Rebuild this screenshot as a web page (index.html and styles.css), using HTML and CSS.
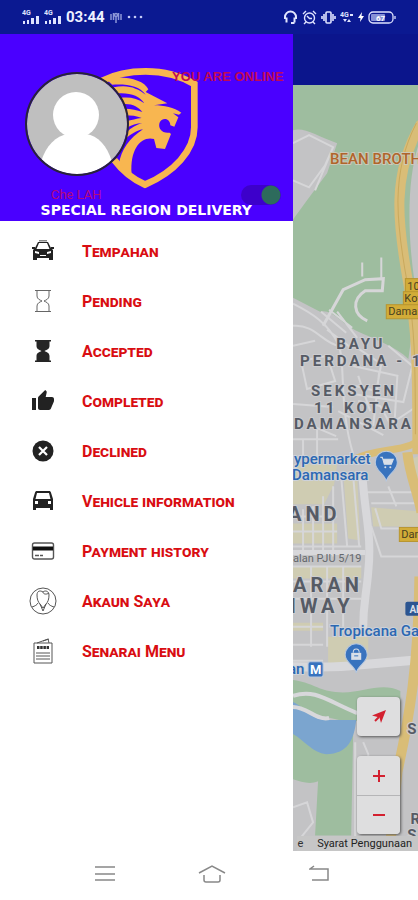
FILE: index.html
```
<!DOCTYPE html>
<html lang="ms">
<head>
  <meta charset="UTF-8">
  <meta name="viewport" content="width=device-width, initial-scale=1.0">
  <title>Special Region Delivery</title>
  <link rel="stylesheet" href="styles.css">
</head>
<body>
  <div class="statusbar">
    <div class="status-group">
      <svg width="18" height="16" viewBox="0 0 18 16" fill="#dfe3ff"><text class="tiny" x="0" y="6">4G</text><path d="M1 12h2v3H1zM5 11h2v4H5zM9 9h3v6H9zM14 7h3v8h-3z"/></svg>
      <svg width="18" height="16" viewBox="0 0 18 16" fill="#dfe3ff"><text class="tiny" x="0" y="6">4G</text><path d="M1 12h2v3H1zM5 11h2v4H5zM9 9h3v6H9zM14 7h3v8h-3z"/></svg>
      <span class="clock">03:44</span>
      <svg width="14" height="14" viewBox="0 0 14 14" fill="none" stroke="#8d96d8" stroke-width="1.5"><path d="M2 4v6M4.500 3v7M9.500 3v7M12 4v6M7 6v7"/><circle cx="7" cy="5" r="1.500"/></svg>
      <svg width="16" height="4" viewBox="0 0 16 4" fill="#c5cbf7"><circle cx="2" cy="2" r="1.300"/><circle cx="8" cy="2" r="1.300"/><circle cx="14" cy="2" r="1.300"/></svg>
    </div>
    <div class="status-group">
      <svg width="15" height="15" viewBox="0 0 15 15" fill="none" stroke="#e4e7ff" stroke-width="2"><path d="M2 9V7a5.500 5.500 0 0 1 11 0v2M3.500 7.500v5M11.500 7.500v5M11.500 13H8"/></svg>
      <svg width="15" height="15" viewBox="0 0 15 15" fill="none" stroke="#dfe3ff" stroke-width="1.400"><circle cx="7.500" cy="8" r="5"/><path d="M5 6l2.500 2.500H10M1 4l3-3M14 4l-3-3M4 12l-2 2M11 12l2 2"/></svg>
      <svg width="15" height="15" viewBox="0 0 15 15" fill="none" stroke="#dfe3ff" stroke-width="1.600"><rect x="5" y="2" width="5" height="11" rx="1"/><path d="M3 4v7M12 4v7M1 6v3M14 6v3"/></svg>
      <svg width="14" height="15" viewBox="0 0 14 15" fill="#dfe3ff"><text class="tiny" x="0" y="7">4G</text><path d="M10 4h3v2h-3zM3 9l2 3 2-3zM7 12l2-3 2 3z"/></svg>
      <svg width="6" height="12" viewBox="0 0 6 12" fill="#fff"><path d="M4 1L0 7h2.500L2 11l4-6H3.500z"/></svg>
      <svg width="28" height="13" viewBox="0 0 28 13" fill="none" stroke="#dfe3ff" stroke-width="1.300"><rect x="1" y="1" width="24" height="11" rx="4"/><path d="M27 5v3"/><rect x="3" y="3" width="14" height="7" rx="1" fill="#8791d6" stroke="none"/><text class="battery" x="8" y="10">67</text></svg>
    </div>
  </div>

  <main class="screen">
    <aside class="drawer">
      <header class="profile">
        <svg class="shield" viewBox="0 0 312 384">
          <path fill="none" stroke="#f8b650" stroke-width="20" d="M10 50C55 27 100 22 140 22c52 0 105 14 146 38v130c0 70-61 135-148 172-38-17-68-42-92-74"/>
          <path fill="#f8b650" d="M20 44C80 34 135 48 148 76L140 84 205 118 165 124C195 124 225 130 247 146L240 152 222 148 238 160 226 188 214 184C214 168 200 160 188 168 178 175 178 192 188 200 194 206 204 206 212 206L216 210 198 255 172 252 165 225C130 215 92 250 98 330L60 300C66 258 92 222 132 196 110 200 95 212 80 224L82 206C98 190 112 182 130 178 112 178 98 184 82 192L82 172C98 168 112 164 128 162 112 156 98 154 78 154L76 134C98 134 114 138 130 144 118 128 100 118 72 120L64 102C92 98 116 104 136 118 122 96 96 86 58 88L44 70C85 60 115 72 140 92 120 66 90 60 40 62z"/>
        </svg>
        <p class="brand">SPECIAL REGION DELIVERY</p>
        <svg class="avatar" viewBox="0 0 104 104">
          <defs><clipPath id="face"><circle cx="52" cy="52" r="50"/></clipPath></defs>
          <circle cx="52" cy="52" r="50" fill="#bfbfbf"/>
          <g clip-path="url(#face)" fill="#fff"><circle cx="51" cy="43" r="23"/><path d="M16 90c5-17 15-26 27-28h18c12 2 21 11 26 28v14H16z"/><path d="M40 58h22v10H40z"/></g>
          <circle cx="52" cy="52" r="51" fill="none" stroke="#29233a" stroke-width="2"/>
        </svg>
        <p class="user-name">Che LAH</p>
        <label class="online-label" for="online">YOU ARE ONLINE</label>
        <input class="switch" type="checkbox" id="online" checked>
      </header>

      <nav class="menu">
        <a href="#tempahan">
          <svg width="24" height="24" viewBox="0 0 24 24" fill="#222"><path d="M8 1h8v1.500H8z" fill="#888"/><path fill-rule="evenodd" d="M7 3h10l3 6 2 2v10h-4v-2H6v2H2V11l2-2zM8 4L5.500 10h13L16 4zM4 12v2l4 1v-2zM20 12l-4 1v2l4-1zM9 16v1h6v-1z"/><path d="M1 8h3v2H1zM20 8h3v2h-3z"/></svg>
          Tempahan
        </a>
        <a href="#pending">
          <svg width="24" height="24" viewBox="0 0 24 24" fill="none" stroke="#666" stroke-width="1"><path d="M4 1.500h16M4 22.500h16M6 2v5c0 3 3 4 5 5-2 1-5 2-5 5v5M18 2v5c0 3-3 4-5 5 2 1 5 2 5 5v5"/></svg>
          Pending
        </a>
        <a href="#accepted">
          <svg width="24" height="24" viewBox="0 0 24 24" fill="#252525"><path d="M4 1h16v1.500h-1.500V7c0 3-3 4-5 5 2 1 5 2 5 5v4.500H20V23H4v-1.500h1.500V17c0-3 3-4 5-5-2-1-5-2-5-5V2.500H4z"/></svg>
          Accepted
        </a>
        <a href="#completed">
          <svg width="24" height="24" viewBox="0 0 24 24" fill="#222"><path d="M1 9h4v12H1zM23 10c0-1.100-.9-2-2-2h-6.300l1-4.600c.1-.7-.1-1.200-.4-1.500L14.200 1 7.600 7.600C7.200 8 7 8.500 7 9v10c0 1.100.9 2 2 2h9c.8 0 1.500-.5 1.800-1.200l3-7.100c.1-.2.2-.5.2-.7z"/></svg>
          Completed
        </a>
        <a href="#declined">
          <svg width="24" height="24" viewBox="0 0 24 24"><circle cx="12" cy="12" r="10.500" fill="#222"/><path d="M8 8l8 8M16 8l-8 8" stroke="#fff" stroke-width="2.200"/></svg>
          Declined
        </a>
        <a href="#vehicle">
          <svg width="24" height="24" viewBox="0 0 24 24" fill="#222"><path fill-rule="evenodd" d="M6 2h12c1 0 1.500.5 1.800 1L22 10v11h-3v-2H5v2H2V10l2.200-7C4.500 2.500 5 2 6 2zM6 4l-1.500 6h15L18 4zM4 12v3h3v-3zM17 12v3h3v-3z"/></svg>
          Vehicle information
        </a>
        <a href="#payment">
          <svg width="24" height="24" viewBox="0 0 24 24" fill="none" stroke="#555" stroke-width="1.400"><rect x="1.500" y="4" width="21" height="16" rx="2"/><path d="M2 9.500h20" stroke="#111" stroke-width="4"/><path d="M4 16.500h4M9 16.500h3"/></svg>
          Payment history
        </a>
        <a href="#akaun">
          <svg width="28" height="28" viewBox="0 0 28 28" fill="none" stroke="#555" stroke-width="1"><circle cx="14" cy="14" r="13"/><path d="M8 8c0-4 3-5 6-3 2-2 6-1 6 3 0 4-1 7-3 9l-3 4-3-4c-2-2-3-5-3-9zM14 5c0 2 3 3 6 1M9 16c-1 2-3 3-6 4M19 16c1 2 3 3 6 4M11 17l3 7 3-7"/></svg>
          Akaun Saya
        </a>
        <a href="#senarai">
          <svg width="28" height="28" viewBox="0 0 28 28" fill="none" stroke="#555" stroke-width="1"><path d="M5 6h18v20H5zM8 6l11-4 1 4M14 4l6-2M7 16h14M7 19h14M7 22h14"/><path d="M8 10.500h12" stroke="#333" stroke-width="3" stroke-dasharray="2.500 .7"/></svg>
          Senarai Menu
        </a>
      </nav>
    </aside>

    <section class="map-pane">
      <div class="appbar"></div>
      <div class="map">
        <svg class="map-canvas" viewBox="0 0 125 766" preserveAspectRatio="xMinYMin slice">
          <rect width="600" height="766" fill="#c3c3c5"/>
          <!-- parks and water -->
          <g fill="#9ebd9f">
            <path d="M0 0h125v200l-10 73c-12-12-35-20-52-28-16-8-24-22-36-19L0 212z"/>
            <path d="M0 593c20 3 25 10 42 12 26 3 44-11 65-1v30H50L0 622z"/>
            <path d="M0 645h60l-2 103H22l3-54c-9 4-17 0-25-2z"/>
          </g>
          <path fill="#c3c3c5" d="M0 45c12-3 24 6 44 13L34 88 14 115 0 134zM125 60c-10 30-12 80-4 135h4z"/>
          <path fill="#7ba5cf" d="M0 615c14 7 19 18 34 18h29c-2 19-8 34-30 34-13-1-21-13-33-20z"/>
          <!-- built up blocks -->
          <g fill="#cfccb2">
            <path d="M0 378h44l-3 20-10 20H0zM78 421l47 4v15H80zM50 385l14 4 3 65-12-2zM35 550h40v28H35zM0 437h44v20H0zM0 480h68v12H0zM0 536h30v8H0zM125 370l-12 5 12 25z"/>
          </g>
          <!-- small streets -->
          <g fill="none" stroke="#d6d6d8" stroke-width="2">
            <path d="M0 58l16-8 24 12-8 18-16 22L0 95M40 62L22 105M69 191v-14M88 194v-22M0 218c20 10 35 20 45 40 8 18 0 60 15 110M28 226l25 21M36 224l23 18M34 244l24 18M44 226l20 26M0 240c22-2 30 18 46 20M58 258l30 20-5 27-25-6M60 280l45 10M95 260l24 20-9 36-50-8M65 315l22 5 10 18 27-18M45 325l45 24M0 260l22-5M8 275l26-5 8 25-28 8zM0 318l40 3M15 338l28 12M65 290l12 35M86 285l-6 55M104 290l-3 50"/>
            <path stroke-width="3" d="M30 240l20-36 22-10 18-1-1 12H72c-14 9-12 24 2 30"/>
            <path d="M0 430h44M0 445h44M0 460h68M0 480h68M0 495h68M0 512h68M0 540h30M0 558h30M0 574h30M10 423v44M20 420v48M30 410v60M40 400v70M18 480v80M34 480v80M50 480v60M48 390l6 70M60 390l6 70M74 406h45M78 417h47M82 422l6 20h37M78 440l10 30h37M95 400l8 20M0 353h45M10 353v20M24 343v30M0 720l14-5 6 20-12 15M62 655v100M70 655l5 12v30"/>
          </g>
          <g fill="none" stroke="#d8d8db">
            <path stroke-width="8" d="M69 385c2 42 10 62 6 100-2 26-6 34-5 65"/>
            <path stroke-width="5" d="M0 466h72"/>
            <path stroke-width="9" d="M0 580c35 0 45 1 65-2l60-5"/>
            <path stroke-width="4" d="M0 609c22-8 36 6 64 17M0 620c14 0 24 14 36 11"/>
          </g>
          <!-- highways -->
          <g fill="none" stroke="#d9bd77" stroke-width="10">
            <path d="M128 38c-30 50-24 100-13 160 8 45 9 70 9 170"/>
            <path d="M125 355c-20 12-38 6-64 18" stroke-width="7"/>
            <path d="M114 366c2 22 10 38 14 60M126 490c-1 90-10 140-22 195l-8 81"/>
          </g>
          <path fill="none" stroke="#c9a95d" d="M123 38c-26 50-20 100-9 160 7 45 8 70 8 150"/>

          <g class="road-tag">
            <rect x="112" y="193" width="30" height="14"/><rect x="110" y="206" width="40" height="14"/><rect x="93" y="219" width="60" height="14"/>
            <rect x="106" y="441" width="60" height="14"/>
          </g>
          <g class="road-name"><text x="114" y="204">10</text><text x="111" y="216">Kota</text><text x="95" y="229">Damansara</text><text x="108" y="452">Damansara</text></g>
          <rect x="112" y="515" width="40" height="14" rx="2" fill="#2c5591"/>
          <text class="route" x="116" y="526">AH2</text>

          <text class="place-orange" x="37" y="79">BEAN BROTHERS</text>
          <g class="area">
            <text x="43" y="263">BAYU</text><text x="7" y="280">PERDANA - 1</text>
            <text x="18" y="310">SEKSYEN</text><text x="21" y="327">11 KOTA</text><text x="1" y="343">DAMANSARA</text>
          </g>
          <g class="area area-large"><text x="-5" y="435">AND</text><text x="0" y="505">ARAN</text><text x="-3" y="526">IWAY</text></g>
          <text class="street" x="0" y="475">alan PJU 5/19</text>
          <g class="poi">
            <text x="1" y="378">ypermarket</text><text x="-1" y="394">Damansara</text><text x="37" y="549">Tropicana Gardens</text><text x="-5" y="587">an</text>
          </g>
          <g class="area"><text x="114" y="647">S</text><text x="117" y="737">R</text><text x="114" y="753">S</text></g>

          <g fill="#3873be" stroke="#b8c8de" stroke-width="1">
            <path d="M93 395c-2-8-11-10-11-19a11 11 0 0 1 22 0c0 9-9 11-11 19zM63 586c-2-8-11-10-11-18a11 11 0 0 1 22 0c0 8-9 10-11 18z"/>
            <rect x="15" y="575" width="15" height="15" rx="2"/>
          </g>
          <path d="M87 371h2l2 7h7l2-5H90" fill="#d8dfe8" stroke="#d8dfe8"/><circle cx="92" cy="381" r="1" fill="#d8dfe8"/><circle cx="97" cy="381" r="1" fill="#d8dfe8"/>
          <path d="M58 566h10v7H58z" fill="#d8dfe8"/><path d="M60 566c0-5 6-5 6 0" fill="none" stroke="#d8dfe8"/><path d="M61 569h4" stroke="#3873be"/>
          <text class="metro" x="17" y="587">M</text>
        </svg>

        <div class="controls">
          <button class="control locate" aria-label="My location">
            <svg width="16" height="16" viewBox="0 0 16 16" fill="#d3202f"><path d="M15 1L10 14 8.500 8.500 1 6.500z"/><path d="M8 8l-4 4" stroke="#d3202f" stroke-width="2"/></svg>
          </button>
          <div class="zoom">
            <button class="control" aria-label="Zoom in"><svg width="14" height="14" viewBox="0 0 14 14" stroke="#d3202f" stroke-width="2"><path d="M7 1v12M1 7h12"/></svg></button>
            <button class="control" aria-label="Zoom out"><svg width="14" height="14" viewBox="0 0 14 14" stroke="#d3202f" stroke-width="2"><path d="M1 7h12"/></svg></button>
          </div>
        </div>
        <div class="terms"><span>e</span><a href="#terms">Syarat Penggunaan</a></div>
      </div>
    </section>
  </main>

  <div class="navbar">
    <button aria-label="Recent apps"><svg width="20" height="18" viewBox="0 0 20 18" fill="none" stroke="#888" stroke-width="1.500"><path d="M0 2h20M0 9h20M0 15h20"/></svg></button>
    <button aria-label="Home"><svg width="28" height="20" viewBox="0 0 28 20" fill="none" stroke="#888" stroke-width="1.500"><path d="M1 9l13-7 13 7M6 11v5c0 1 1 2 2 2h12c1 0 2-1 2-2v-5"/></svg></button>
    <button aria-label="Back"><svg width="20" height="18" viewBox="0 0 20 18" fill="none" stroke="#888" stroke-width="1.500"><path d="M5 1L1 4h18v11H3"/></svg></button>
  </div>
</body>
</html>
```
FILE: styles.css
```
* {
  box-sizing: border-box;
}

body {
  margin: 0;
  min-height: 100vh;
  display: flex;
  flex-direction: column;
  font-family: Roboto, Arial, sans-serif;
  background: #fff;
  overflow-x: hidden;
}

p {
  margin: 0;
}

button {
  border: none;
  padding: 0;
  background: none;
  cursor: pointer;
}

/* status bar */
.statusbar {
  display: flex;
  justify-content: space-between;
  align-items: center;
  height: 34px;
  padding: 0 22px;
  background: #0b1991;
}

.status-group {
  display: flex;
  align-items: center;
  gap: 4px;
}

.clock {
  font-size: 15px;
  font-weight: 700;
  color: #eef0ff;
}

.tiny {
  font-size: 7px;
  font-weight: 700;
}

.battery {
  font-size: 8px;
  font-weight: 700;
  fill: #fff;
  stroke: none;
}

.screen {
  display: flex;
  flex: 1;
}

/* drawer */
.drawer {
  width: 70%;
  background: #fff;
}

.profile {
  position: relative;
  display: flex;
  flex-direction: column;
  align-items: center;
  height: 187px;
  padding-top: 30px;
  background: #4a00ff;
}

.shield {
  flex: none;
  width: 104px;
  height: 128px;
  margin-left: 10px;
}

.brand {
  padding-top: 9px;
  font-family: "DejaVu Sans", sans-serif;
  font-size: 14px;
  font-weight: 700;
  line-height: 18px;
  white-space: nowrap;
  color: #fff;
}

.avatar {
  position: absolute;
  left: 25px;
  top: 38px;
  width: 104px;
  height: 104px;
}

.user-name {
  position: absolute;
  left: 51px;
  top: 153px;
  font-size: 13px;
  line-height: 16px;
  color: #b5087b;
}

.online-label {
  position: absolute;
  right: 9px;
  top: 35px;
  font-family: "Liberation Sans", Arial, sans-serif;
  font-size: 13px;
  font-weight: 700;
  line-height: 16px;
  color: #c00a55;
}

.switch {
  appearance: none;
  position: absolute;
  right: 12px;
  bottom: 16px;
  width: 40px;
  height: 20px;
  margin: 0;
  border-radius: 10px;
  background: radial-gradient(circle at 30px 10px, #2d6b5c 9px, transparent 10px), #3d00cb;
}

.menu {
  display: flex;
  flex-direction: column;
  padding-top: 5px;
}

.menu a {
  display: flex;
  align-items: center;
  height: 50px;
  padding-left: 82px;
  font-size: 16px;
  font-weight: 700;
  font-variant: small-caps;
  text-decoration: none;
  color: #d90d12;
}

.menu svg {
  flex: none;
  width: 28px;
  margin-left: -53px;
  margin-right: 25px;
}

/* map */
.map-pane {
  flex: 1;
  display: flex;
  flex-direction: column;
  min-width: 0;
}

.appbar {
  height: 51px;
  background: #0b158c;
}

.map {
  position: relative;
  flex: 1;
  overflow: hidden;
  background: #c3c3c5;
}

.map-canvas {
  position: absolute;
  width: 100%;
  height: 100%;
}

.road-tag {
  fill: #d2ac38;
  stroke: #b8952f;
}

.road-name {
  font-size: 11px;
  fill: #4b4220;
}

.route {
  font-size: 10px;
  font-weight: 700;
  fill: #d8dfe8;
}

.place-orange {
  font-size: 15px;
  font-weight: 500;
  fill: #b0652b;
  stroke: #cbc9b8;
  stroke-width: 2px;
  paint-order: stroke;
}

.area {
  font-size: 15px;
  font-weight: 700;
  letter-spacing: 3px;
  fill: #565b65;
  stroke: #cdcdd0;
  stroke-width: 2px;
  paint-order: stroke;
}

.area-large {
  font-size: 20px;
  letter-spacing: 4px;
}

.street {
  font-size: 11px;
  fill: #65686d;
}

.poi {
  font-size: 15px;
  font-weight: 500;
  fill: #2c68b2;
  stroke: #cdd2da;
  stroke-width: 2px;
  paint-order: stroke;
}

.metro {
  font-size: 13px;
  font-weight: 700;
  fill: #fff;
}

.controls {
  position: absolute;
  right: 18px;
  bottom: 17px;
  display: flex;
  flex-direction: column;
  gap: 20px;
  width: 43px;
}

.control {
  display: flex;
  align-items: center;
  justify-content: center;
  width: 100%;
  height: 39px;
  background: #dededf;
}

.locate,
.zoom {
  border-radius: 4px;
  overflow: hidden;
  box-shadow: 1px 1px 3px #555;
}

.zoom .control + .control {
  border-top: 1px solid #b5b5b7;
}

.terms {
  position: absolute;
  right: 0;
  bottom: 0;
  display: flex;
  gap: 14px;
  padding: 0 6px 0 0;
  font-size: 11px;
  line-height: 15px;
  white-space: nowrap;
  color: #333;
  background: #c6c6c6;
}

.terms a {
  color: #222;
  text-decoration: none;
}

/* system navigation */
.navbar {
  display: grid;
  grid-template-columns: repeat(3, 1fr);
  height: 49px;
  padding: 0 45px 0 51px;
  background: #fff;
}
```
